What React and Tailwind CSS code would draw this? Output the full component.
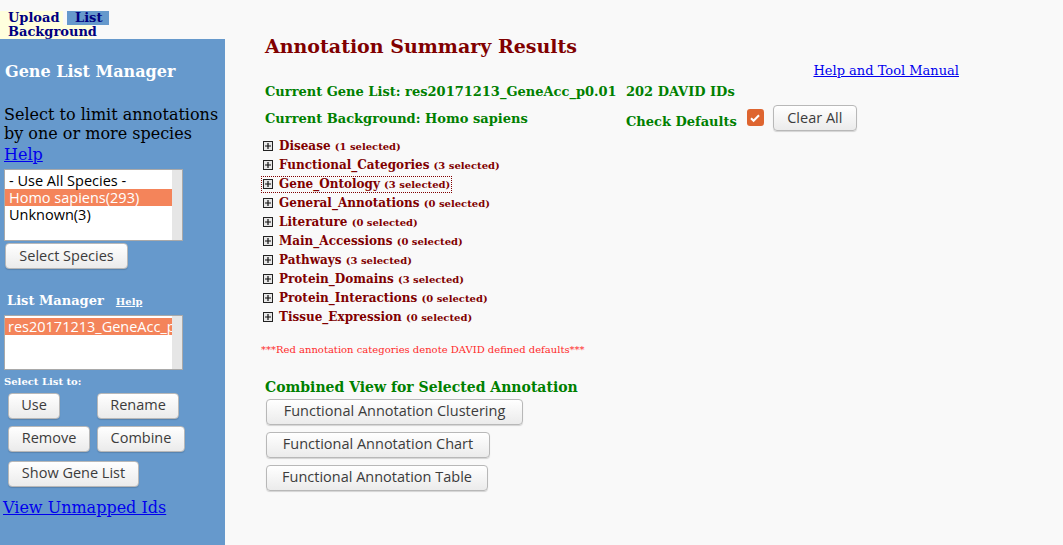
import React from 'react';

const serif = { fontFamily: '"DejaVu Serif", serif' };

const Btn = ({ children, className = '' }) => (
  <button
    className={`h-[26px] rounded-[4px] border border-[#b8b8b8] bg-gradient-to-b from-white to-[#ebebeb] px-3 text-[14.5px] text-[#3c3c3c] shadow-[0_1px_1px_rgba(0,0,0,0.15)] font-['Open_Sans',sans-serif] leading-none ${className}`}
  >
    {children}
  </button>
);

const categories = [
  ['Disease', '1 selected'],
  ['Functional_Categories', '3 selected'],
  ['Gene_Ontology', '3 selected'],
  ['General_Annotations', '0 selected'],
  ['Literature', '0 selected'],
  ['Main_Accessions', '0 selected'],
  ['Pathways', '3 selected'],
  ['Protein_Domains', '3 selected'],
  ['Protein_Interactions', '0 selected'],
  ['Tissue_Expression', '0 selected'],
];

const PlusBox = () => (
  <svg width="10" height="10" viewBox="0 0 10 10" className="shrink-0">
    <rect x="0.5" y="0.5" width="9" height="9" fill="#e8e8e8" stroke="#222" />
    <path d="M2 5h6M5 2v6" stroke="#111" strokeWidth="1.2" />
  </svg>
);

export default function App() {
  return (
    <div className="flex min-h-[545px] w-[1063px] bg-[#f9f9f9]" style={serif}>
      {/* Left column */}
      <div className="flex w-[225px] shrink-0 flex-col">
        <div className="pt-[11px] text-[13px] font-bold leading-[14px] text-[#000080]">
          <div className="flex">
            <span className="w-[63px] bg-[#ffffdd] pl-[8px]">Upload</span>
            <span className="ml-[4px] w-[42px] bg-[#6699cc] pl-[8px]">List</span>
          </div>
          <div className="w-[92px] bg-[#ffffdd] pl-[8px]">Background</div>
        </div>
        <div className="flex-1 bg-[#6699cc] pl-[4px]">
          <div className="mt-[21px] pl-[1px] text-[16px] font-bold text-white">Gene List Manager</div>
          <div className="mt-[21px] whitespace-nowrap text-[16px] leading-[19px] text-black">
            Select to limit annotations<br />by one or more species
          </div>
          <a className="text-[16px] leading-[19px] text-[#0000ee] underline">Help</a>
          <div className="mt-[2px] flex h-[72px] w-[179px] border border-[#a9a9a9] bg-white font-['Open_Sans',sans-serif] text-[14.5px] leading-[17px]">
            <div className="flex-1 pt-[2px]">
              <div className="pl-[4px] text-black">- Use All Species -</div>
              <div className="bg-[#f4845a] pl-[4px] text-white">Homo sapiens(293)</div>
              <div className="pl-[4px] text-black">Unknown(3)</div>
            </div>
            <div className="w-[10px] bg-[#e6e6e6]" />
          </div>
          <Btn className="mt-[2px] ml-[1px] w-[123px]">Select Species</Btn>
          <div className="mt-[22px] flex items-baseline pl-[3px]">
            <span className="text-[13px] font-bold text-white">List Manager</span>
            <a className="ml-[12px] text-[10px] font-bold text-white underline">Help</a>
          </div>
          <div className="mt-[4px] flex h-[55px] w-[179px] border border-[#a9a9a9] bg-white font-['Open_Sans',sans-serif] text-[14.5px] leading-[17px]">
            <div className="flex-1 overflow-hidden pt-[2px]">
              <div className="whitespace-nowrap bg-[#f4845a] pl-[3px] text-white">res20171213_GeneAcc_p0.01</div>
            </div>
            <div className="w-[10px] bg-[#e6e6e6]" />
          </div>
          <div className="mt-[4px] text-[10px] font-bold text-white">Select List to:</div>
          <div className="mt-[4px] grid w-[180px] grid-cols-[89px_auto] gap-y-[7px] pl-[4px]">
            <Btn className="w-[52px]">Use</Btn>
            <Btn className="w-[82px]">Rename</Btn>
            <Btn className="w-[82px]">Remove</Btn>
            <Btn className="w-[88px]">Combine</Btn>
          </div>
          <Btn className="mt-[9px] ml-[4px] w-[131px]">Show Gene List</Btn>
          <div className="mt-[9px] -ml-[1px] text-[16px] text-[#0000ee] underline">View Unmapped Ids</div>
        </div>
      </div>

      {/* Main content */}
      <div className="flex-1 pl-[40px] pt-[34px]">
        <h1 className="text-[19px] font-bold leading-[24px] text-[#800000]">Annotation Summary Results</h1>
        <div className="mt-[5px] w-[694px] text-right text-[13px] leading-[16px]">
          <a className="text-[#0000ee] underline">Help and Tool Manual</a>
        </div>
        <div className="grid grid-cols-[361px_auto] text-[13px] font-bold text-[#008000]">
          <div className="mt-[5px] leading-[16px]">Current Gene List: res20171213_GeneAcc_p0.01</div>
          <div className="mt-[5px] leading-[16px]">202 DAVID IDs</div>
          <div className="mt-[11px] leading-[16px]">Current Background: Homo sapiens</div>
          <div className="mt-[4px] flex items-center">
            <span className="mt-[8px]">Check Defaults</span>
            <span className="ml-[10px] flex h-[17px] w-[17px] items-center justify-center rounded-[3px] bg-[#de6530]">
              <svg width="12" height="12" viewBox="0 0 12 12">
                <path d="M2 6.2l2.6 2.6L10 3.2" fill="none" stroke="white" strokeWidth="2" />
              </svg>
            </span>
            <Btn className="ml-[9px] w-[84px] font-normal">Clear All</Btn>
          </div>
        </div>
        <div className="mt-[5px] -ml-[3px]">
          {categories.map(([name, sel]) => (
            <div key={name} className="flex h-[19px] items-center">
              <div
                className={`flex items-center gap-[6px] pl-[1px] pr-[1px] ${
                  name === 'Gene_Ontology' ? 'outline outline-1 outline-dotted outline-[#800000]' : ''
                }`}
              >
                <PlusBox />
                <span className="text-[12px] font-bold leading-[15px] text-[#800000]">
                  {name} <span className="text-[10px]">({sel})</span>
                </span>
              </div>
            </div>
          ))}
        </div>
        <div className="mt-[15px] -ml-[4px] text-[10px] text-[#ff2a2a]">***Red annotation categories denote DAVID defined defaults***</div>
        <div className="mt-[21px] text-[14px] font-bold leading-[18px] text-[#008000]">Combined View for Selected Annotation</div>
        <div className="mt-[3px] flex flex-col items-start gap-[7px] pl-[1px]">
          <Btn className="w-[257px]">Functional Annotation Clustering</Btn>
          <Btn className="w-[224px]">Functional Annotation Chart</Btn>
          <Btn className="w-[222px]">Functional Annotation Table</Btn>
        </div>
      </div>
    </div>
  );
}
